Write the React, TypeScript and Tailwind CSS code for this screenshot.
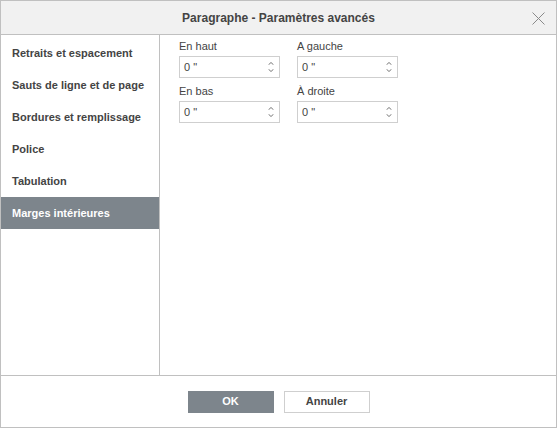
import React from 'react';

const tabs = [
  'Retraits et espacement',
  'Sauts de ligne et de page',
  'Bordures et remplissage',
  'Police',
  'Tabulation',
  'Marges intérieures',
];

function Spin({ label }: { label: string }) {
  return (
    <div className="flex flex-col">
      <span className="text-[11px] leading-[13px] text-[#444] mb-[3px]">{label}</span>
      <div className="w-[101px] h-[22px] border border-[#cfcfcf] flex items-center justify-between pl-[4px] pr-[5px]">
        <span className="text-[11px] text-[#444]">0 "</span>
        <div className="flex flex-col items-center gap-[4px]">
          <svg width="6" height="3" viewBox="0 0 6 3">
            <path d="M0.5 2.8 L3 0.5 L5.5 2.8" fill="none" stroke="#777" strokeWidth="1" />
          </svg>
          <svg width="6" height="3" viewBox="0 0 6 3">
            <path d="M0.5 0.2 L3 2.5 L5.5 0.2" fill="none" stroke="#777" strokeWidth="1" />
          </svg>
        </div>
      </div>
    </div>
  );
}

export default function App() {
  return (
    <div
      className="w-[557px] h-[428px] bg-white border border-[#c0c0c0] flex flex-col"
      style={{ fontFamily: '"Liberation Sans", Arial, sans-serif' }}
    >
      {/* Header */}
      <div className="h-[34px] shrink-0 bg-[#f1f1f1] border-b border-[#c0c0c0] flex items-center justify-center relative">
        <span className="text-[12px] font-bold text-[#444]">Paragraphe - Paramètres avancés</span>
        <svg className="absolute right-[11px] top-[11px]" width="13" height="13" viewBox="0 0 13 13">
          <path d="M0.5 0.5 L12.5 12.5 M12.5 0.5 L0.5 12.5" stroke="#8a8a8a" strokeWidth="1" fill="none" />
        </svg>
      </div>

      {/* Body */}
      <div className="flex flex-1 min-h-0">
        <div className="w-[159px] shrink-0 border-r border-[#c0c0c0] pt-[2px]">
          {tabs.map((t, i) => (
            <div
              key={t}
              className={
                'h-[32px] flex items-center pl-[11px] text-[11px] font-bold ' +
                (i === 5 ? 'bg-[#7d858c] text-white' : 'text-[#444]')
              }
            >
              {t}
            </div>
          ))}
        </div>
        <div className="flex-1 pl-[19px] pt-[5px]">
          <div className="grid grid-cols-[101px_101px] gap-x-[17px] gap-y-[7px]">
            <Spin label="En haut" />
            <Spin label="A gauche" />
            <Spin label="En bas" />
            <Spin label="À droite" />
          </div>
        </div>
      </div>

      {/* Footer */}
      <div className="h-[52px] shrink-0 border-t border-[#c0c0c0] flex items-center justify-center gap-[10px]">
        <button className="w-[86px] h-[22px] bg-[#7d858c] text-white text-[11px] font-bold">OK</button>
        <button className="w-[86px] h-[22px] bg-white border border-[#cfcfcf] text-[#444] text-[11px] font-bold">
          Annuler
        </button>
      </div>
    </div>
  );
}
